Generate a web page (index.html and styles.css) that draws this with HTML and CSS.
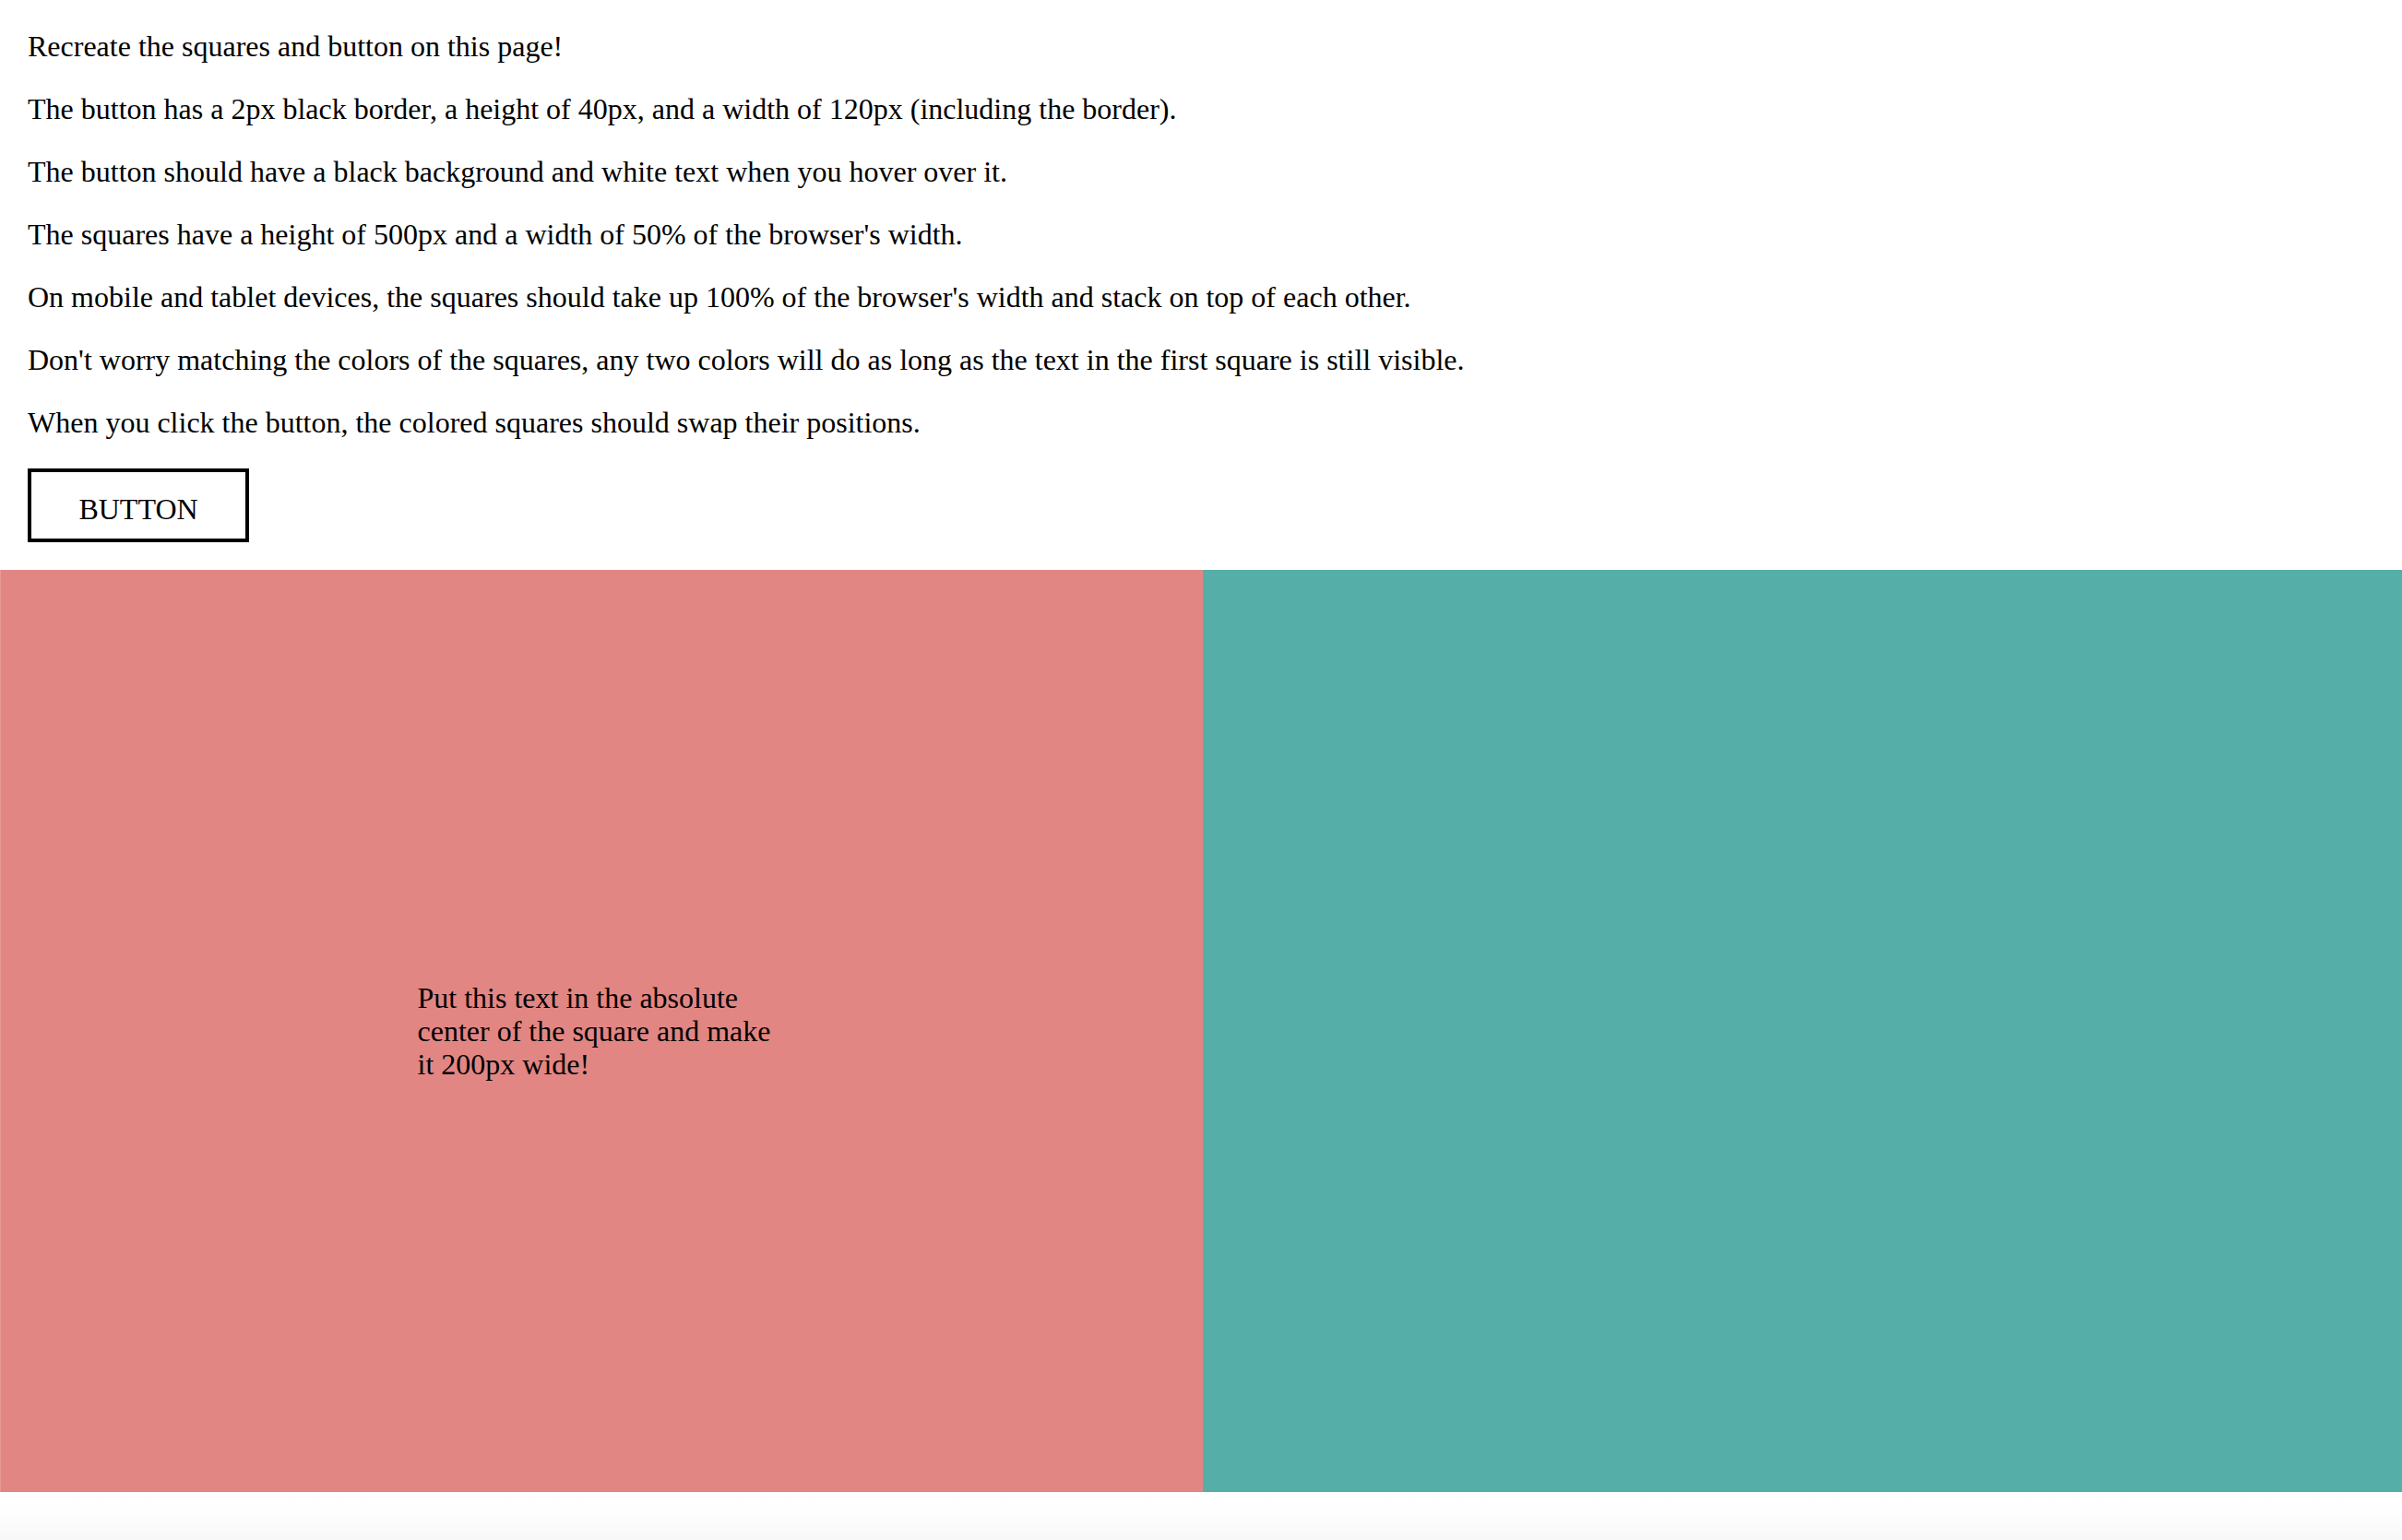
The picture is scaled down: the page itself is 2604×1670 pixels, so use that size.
FILE: index.html
```html
<!DOCTYPE html>
<html lang="en">
<head>
<meta charset="utf-8">
<title>Squares</title>
<link rel="stylesheet" href="styles.css">
</head>
<body>
<div class="intro">
  <p>Recreate the squares and button on this page!</p>
  <p>The button has a 2px black border, a height of 40px, and a width of 120px (including the border).</p>
  <p>The button should have a black background and white text when you hover over it.</p>
  <p>The squares have a height of 500px and a width of 50% of the browser's width.</p>
  <p>On mobile and tablet devices, the squares should take up 100% of the browser's width and stack on top of each other.</p>
  <p>Don't worry matching the colors of the squares, any two colors will do as long as the text in the first square is still visible.</p>
  <p>When you click the button, the colored squares should swap their positions.</p>
  <button class="btn" type="button">BUTTON</button>
</div>
<div class="squares">
  <div class="square square-a">
    <div class="note">Put this text in the absolute center of the square and make it 200px wide!</div>
  </div>
  <div class="square square-b"></div>
</div>
<div class="foot"></div>
</body>
</html>
```

FILE: styles.css
```css
html, body {
  margin: 0;
  padding: 0;
  background: #ffffff;
}

body {
  font-family: "Liberation Serif", "Times New Roman", serif;
  font-size: 32px;
  line-height: 36px;
  color: #000000;
}

.intro {
  padding: 32px 30px 30px;
}

.intro p {
  margin: 0 0 32px;
}

.btn {
  display: block;
  box-sizing: border-box;
  width: 240px;
  height: 80px;
  margin: 0;
  padding: 7px 0 0;
  border: 4px solid #000000;
  background: #ffffff;
  color: #000000;
  font-family: "Liberation Serif", "Times New Roman", serif;
  font-size: 32px;
  line-height: 36px;
  cursor: pointer;
}

.btn:hover {
  background: #000000;
  color: #ffffff;
}

.squares {
  display: flex;
}

.square {
  height: 1000px;
  box-sizing: border-box;
}

.square-a {
  flex: 0 0 calc(50% + 2px);
  background: #e28683;
  border-left: 1px solid #e69896;
  display: flex;
  align-items: center;
  justify-content: center;
}

.square-b {
  flex: 1 1 auto;
  background: #55afa8;
}

.note {
  width: 400px;
}

.foot {
  height: 52px;
  background: linear-gradient(#ffffff 0%, #fefefe 40%, #f8f8f8 100%);
}
```
